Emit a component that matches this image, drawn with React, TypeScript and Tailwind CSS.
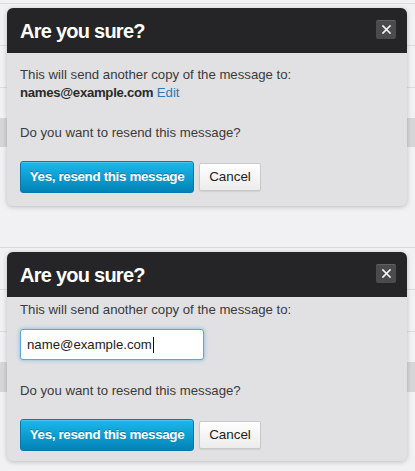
import React from "react";

const font = { fontFamily: '"Liberation Sans", Arial, sans-serif' };

function CloseBtn() {
  return (
    <div className="absolute right-[11px] top-[12px] flex h-[19px] w-[20px] items-center justify-center rounded-[2px] bg-[#4b4a4d] shadow-[inset_0_1px_0_rgba(255,255,255,0.12)]">
      <svg width="9" height="9" viewBox="0 0 9 9">
        <path d="M1 1L8 8M8 1L1 8" stroke="#f4f4f4" strokeWidth="1.7" strokeLinecap="square" />
      </svg>
    </div>
  );
}

function Buttons() {
  return (
    <div className="flex items-center gap-[5px]">
      <button className="h-[32px] w-[174px] rounded-[3px] border border-[#0a78a8] bg-gradient-to-b from-[#1bb8ec] to-[#0383b6] text-[13.4px] font-bold tracking-[-0.35px] text-white [text-shadow:0_-1px_0_rgba(0,0,0,0.25)] shadow-[inset_0_1px_0_rgba(255,255,255,0.2)]">
        Yes, resend this message
      </button>
      <button className="h-[28px] w-[62px] rounded-[2px] border border-[#c9c9c9] bg-gradient-to-b from-[#ffffff] to-[#ececec] text-[13.4px] text-[#222] shadow-[0_1px_1px_rgba(0,0,0,0.08)]">
        Cancel
      </button>
    </div>
  );
}

function Header() {
  return (
    <div className="relative flex h-[45px] items-center rounded-t-[6px] bg-[#252427] pl-[13px]">
      <h2 className="text-[20px] font-bold tracking-[-0.75px] text-white">Are you sure?</h2>
      <CloseBtn />
    </div>
  );
}

export default function App() {
  return (
    <div style={font} className="relative h-[471px] w-[415px] overflow-hidden bg-[#f1f1f3] text-[13.2px] leading-[18px] text-[#3a3a3a]">
      {/* background page rows */}
      <div className="flex h-full flex-col">
        <div className="h-[4px] border-b border-[#dcdcde]" />
        <div className="h-[42px] border-b border-[#dcdcde]" />
        <div className="h-[42px] border-b border-[#dcdcde]" />
        <div className="h-[30px]" />
        <div className="h-[29px] bg-[#d6d6d8]" />
        <div className="h-[101px] border-b border-[#dadadc]" />
        <div className="h-[42px] border-b border-[#dcdcde]" />
        <div className="h-[42px] border-b border-[#dcdcde]" />
        <div className="h-[30px]" />
        <div className="h-[30px] bg-[#d6d6d8]" />
        <div className="flex-1" />
      </div>

      {/* modal 1 */}
      <div className="absolute left-[7px] top-[8px] w-[400px] rounded-[6px] bg-[#e1e1e3] shadow-[0_1px_5px_rgba(0,0,0,0.22)]">
        <Header />
        <div className="px-[13px] pb-[13px] pt-[13px]">
          <p>This will send another copy of the message to:</p>
          <p>
            <span className="font-bold tracking-[-0.3px] text-[#2a2a2a]">names@example.com</span>{" "}
            <span className="text-[#2b7ab6]">Edit</span>
          </p>
          <p className="mt-[22px]">Do you want to resend this message?</p>
          <div className="mt-[19px]">
            <Buttons />
          </div>
        </div>
      </div>

      {/* modal 2 */}
      <div className="absolute left-[7px] top-[252px] w-[400px] rounded-[6px] bg-[#e1e1e3] shadow-[0_1px_5px_rgba(0,0,0,0.22)]">
        <Header />
        <div className="px-[13px] pb-[10px] pt-[4px]">
          <p>This will send another copy of the message to:</p>
          <div className="mt-[10px] flex h-[31px] w-[184px] items-center rounded-[3px] border border-[#5aa8dc] bg-white pl-[6px] text-[13.2px] text-[#222] shadow-[0_0_4px_rgba(60,150,220,0.6)]">
            <span>name@example.com</span>
            <span className="ml-[1px] inline-block h-[16px] w-[1px] bg-[#111]" />
          </div>
          <p className="mt-[22px]">Do you want to resend this message?</p>
          <div className="mt-[19px]">
            <Buttons />
          </div>
        </div>
      </div>
    </div>
  );
}
